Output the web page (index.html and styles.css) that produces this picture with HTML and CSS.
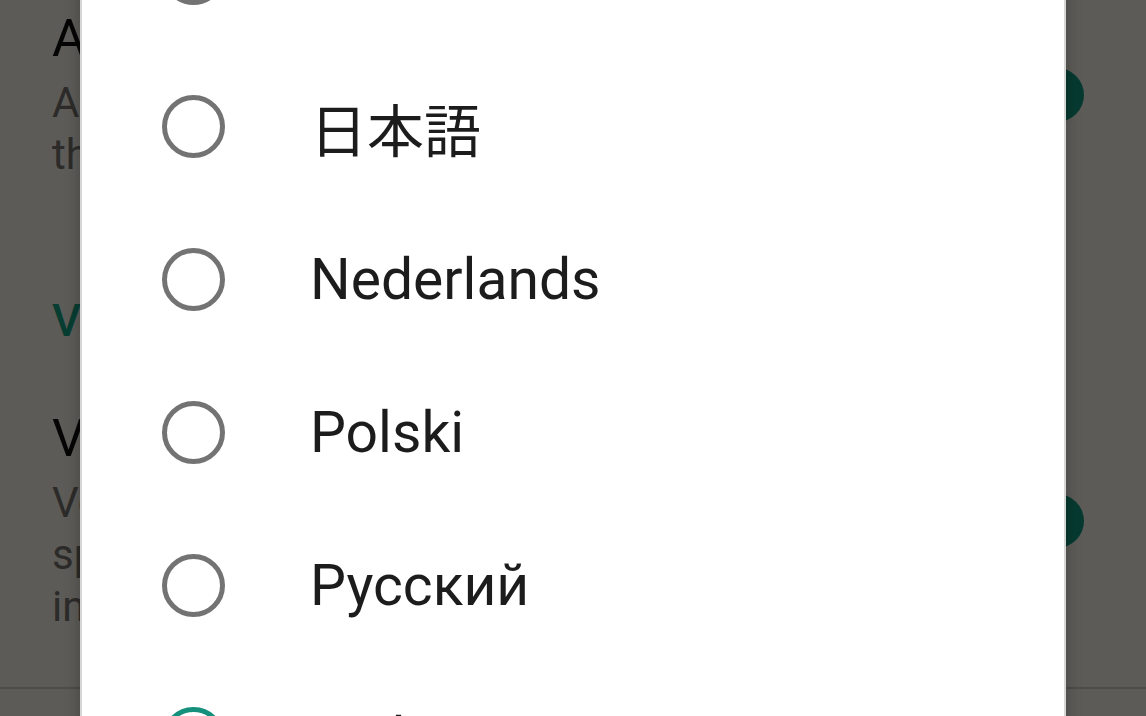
FILE: index.html
```html
<!DOCTYPE html>
<html lang="en">
<head>
<meta charset="utf-8">
<title>Language</title>
<link rel="stylesheet" href="styles.css">
</head>
<body>
<div class="screen">
  <div class="pref">
    <div class="pref-text">
      <div class="pref-title">Auto-capitalization</div>
      <div class="pref-summary">
        <span class="line">Automatically capitalize the first word of each</span>
        <span class="line">the sentence you type</span>
      </div>
    </div>
    <div class="switch"><span class="track"></span><span class="thumb"></span></div>
  </div>
  <div class="section">Voice input</div>
  <div class="pref">
    <div class="pref-text">
      <div class="pref-title">Voice typing key</div>
      <div class="pref-summary">
        <span class="line">Voice input key shows on the keyboard so you can</span>
        <span class="line">speak words in place of typing them</span>
        <span class="line">in any text field</span>
      </div>
    </div>
    <div class="switch"><span class="track"></span><span class="thumb"></span></div>
  </div>
  <div class="divider"></div>
</div>

<div class="dialog">
  <div class="option"><span class="radio"></span><span class="label">Italiano</span></div>
  <div class="option"><span class="radio"></span><span class="label">日本語</span></div>
  <div class="option"><span class="radio"></span><span class="label">Nederlands</span></div>
  <div class="option"><span class="radio"></span><span class="label">Polski</span></div>
  <div class="option"><span class="radio"></span><span class="label">Русский</span></div>
  <div class="option"><span class="radio radio-on"></span><span class="label">Türkçe</span></div>
</div>
</body>
</html>
```

FILE: styles.css
```css
html, body {
  margin: 0;
  padding: 0;
}

body {
  width: 1146px;
  height: 716px;
  overflow: hidden;
  position: relative;
  background: #5c5b57;
  font-family: Roboto, "Noto Sans", "Noto Sans CJK JP", sans-serif;
}

.screen {
  padding: 9px 0 0 52px;
}

.pref {
  display: flex;
  align-items: center;
}

.pref-text {
  flex: 1;
  min-width: 0;
  white-space: nowrap;
  overflow: hidden;
}

.pref-title {
  font-size: 52px;
  line-height: 60px;
  color: #050505;
}

.pref-summary {
  margin-top: 8px;
  font-size: 42px;
  line-height: 52px;
  color: #2c2b29;
}

.line {
  display: block;
}

.section {
  margin-top: 114px;
  margin-bottom: 62px;
  font-size: 45px;
  line-height: 52px;
  font-weight: 500;
  color: #083d32;
}

.switch {
  flex: none;
  width: 100px;
  height: 54px;
  margin-right: 62px;
  position: relative;
}

.track {
  position: absolute;
  left: 6px;
  right: 10px;
  top: 14px;
  height: 26px;
  border-radius: 13px;
  background: #34554e;
}

.thumb {
  position: absolute;
  right: 0;
  top: 0;
  width: 54px;
  height: 54px;
  border-radius: 50%;
  background: #063a30;
}

.divider {
  margin-top: 54px;
  margin-left: -52px;
  height: 2px;
  background: #4d4c49;
}

.dialog {
  position: absolute;
  left: 80px;
  top: -103px;
  width: 982px;
  border-left: 2px solid #d6d6d4;
  border-right: 2px solid #d6d6d4;
  background: #ffffff;
  box-shadow: 0 0 14px rgba(0, 0, 0, 0.25);
}

.option {
  height: 153px;
  display: flex;
  align-items: center;
  padding-left: 80px;
}

.radio {
  flex: none;
  box-sizing: border-box;
  width: 63px;
  height: 63px;
  border: 5px solid #737373;
  border-radius: 50%;
}

.radio-on {
  border-color: #14907c;
  display: flex;
  align-items: center;
  justify-content: center;
}

.radio-on::after {
  content: "";
  width: 31px;
  height: 31px;
  border-radius: 50%;
  background: #14907c;
}

.label {
  margin-left: 85px;
  font-size: 57px;
  color: #1c1c1c;
  font-family: Roboto, "Noto Sans CJK JP", sans-serif;
}
```
